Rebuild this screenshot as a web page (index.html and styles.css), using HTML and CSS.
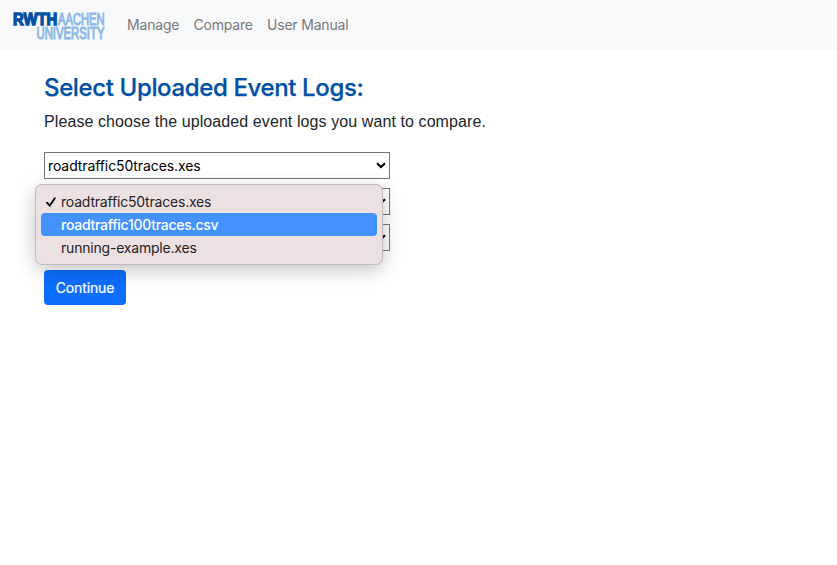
FILE: index.html
```html
<!DOCTYPE html>
<html lang="en">
<head>
<meta charset="utf-8">
<title>Compare</title>
<link rel="stylesheet" href="styles.css">
</head>
<body>
<nav class="navbar">
  <a class="brand">
    <svg width="100" height="40" viewBox="0 -6 100 40">
      <g font-family="Liberation Sans, sans-serif" font-size="17.3">
        <text transform="translate(1 12.8) scale(.857 1)" font-weight="700" fill="#0050a4" stroke="#0050a4" stroke-width="1.4">RWTH</text>
        <text transform="translate(46 12.8) scale(.645 1)" fill="#8ebae5" stroke="#8ebae5" stroke-width="1.2">AACHEN</text>
        <text transform="translate(24.5 26.8) scale(.655 1)" fill="#8ebae5" stroke="#8ebae5" stroke-width="1.2">UNIVERSITY</text>
      </g>
    </svg>
  </a>
  <a class="link">Manage</a>
  <a class="link">Compare</a>
  <a class="link">User Manual</a>
</nav>
<main class="content">
  <h1 class="title">Select Uploaded Event Logs:</h1>
  <p class="intro">Please choose the uploaded event logs you want to compare.</p>
  <div class="selects">
    <div class="select"><span>roadtraffic50traces.xes</span><svg class="chevron" width="10" height="7" viewBox="0 0 10 7"><path d="M1 1.2 5 5 9 1.2"/></svg></div>
    <div class="select"><svg class="chevron" width="10" height="7" viewBox="0 0 10 7"><path d="M1 1.2 5 5 9 1.2"/></svg></div>
    <div class="select"><svg class="chevron" width="10" height="7" viewBox="0 0 10 7"><path d="M1 1.2 5 5 9 1.2"/></svg></div>
    <div class="menu">
      <div class="option"><svg class="check" width="10" height="10" viewBox="0 0 10 10"><path d="M1 5.6 3.7 8.7 8.8 1.2"/></svg><span>roadtraffic50traces.xes</span></div>
      <div class="option active"><span>roadtraffic100traces.csv</span></div>
      <div class="option"><span>running-example.xes</span></div>
    </div>
  </div>
  <button class="continue">Continue</button>
</main>
</body>
</html>
```
FILE: styles.css
```css
* { box-sizing: border-box; }
body { margin: 0; background: #fff; font-family: Inter, sans-serif; color: #212529; }
.navbar { display: flex; align-items: center; height: 50px; padding-left: 12px; background: #f8f9fb; }
.brand { display: flex; width: 100px; margin-right: 15px; padding-top: 2px; }
.link { font-size: 14px; line-height: 20px; letter-spacing: -.19px; color: #777879; margin-right: 14.2px; white-space: nowrap; }
.content { padding: 23px 44px; }
.title { margin: 0; font-size: 24px; line-height: 30px; font-weight: 500; letter-spacing: -.37px; color: #0050a4; -webkit-text-stroke: .25px #0050a4; white-space: nowrap; }
.intro { margin: 7px 0 0; font: 16px/24px "Liberation Sans", sans-serif; letter-spacing: .09px; }
.selects { position: relative; display: flex; flex-direction: column; gap: 9px; width: 346px; margin-top: 18px; }
.select { display: flex; align-items: center; height: 27px; padding: 0 3px; border: 1px solid #767676; background: #fff; color: #000; font-size: 14px; letter-spacing: -.1px; }
.chevron { margin-left: auto; fill: none; stroke: #000; stroke-width: 2; }
.menu { position: absolute; left: -8px; top: 33px; width: 346px; height: 79px; padding: 5px; border-radius: 6px; background: #ece0e2; box-shadow: 0 0 0 1px #c3babc, 0 5px 20px rgba(0, 0, 0, .26); }
.option { position: relative; height: 23px; padding-left: 20px; border-radius: 4px; font-size: 14px; line-height: 23px; letter-spacing: -.2px; color: #262324; }
.active { background: #4392ff; color: #fff; font-weight: 500; letter-spacing: -.27px; }
.check { position: absolute; left: 5px; top: 7px; fill: none; stroke: #000; stroke-width: 1.8; stroke-linecap: round; }
.continue { display: block; width: 82px; height: 35px; margin-top: 19px; padding: 0; border: 0; border-radius: 4px; background: #0d6efd; color: #fff; font: 14px/20px Inter, sans-serif; letter-spacing: -.12px; -webkit-text-stroke: .2px #fff; }
```
